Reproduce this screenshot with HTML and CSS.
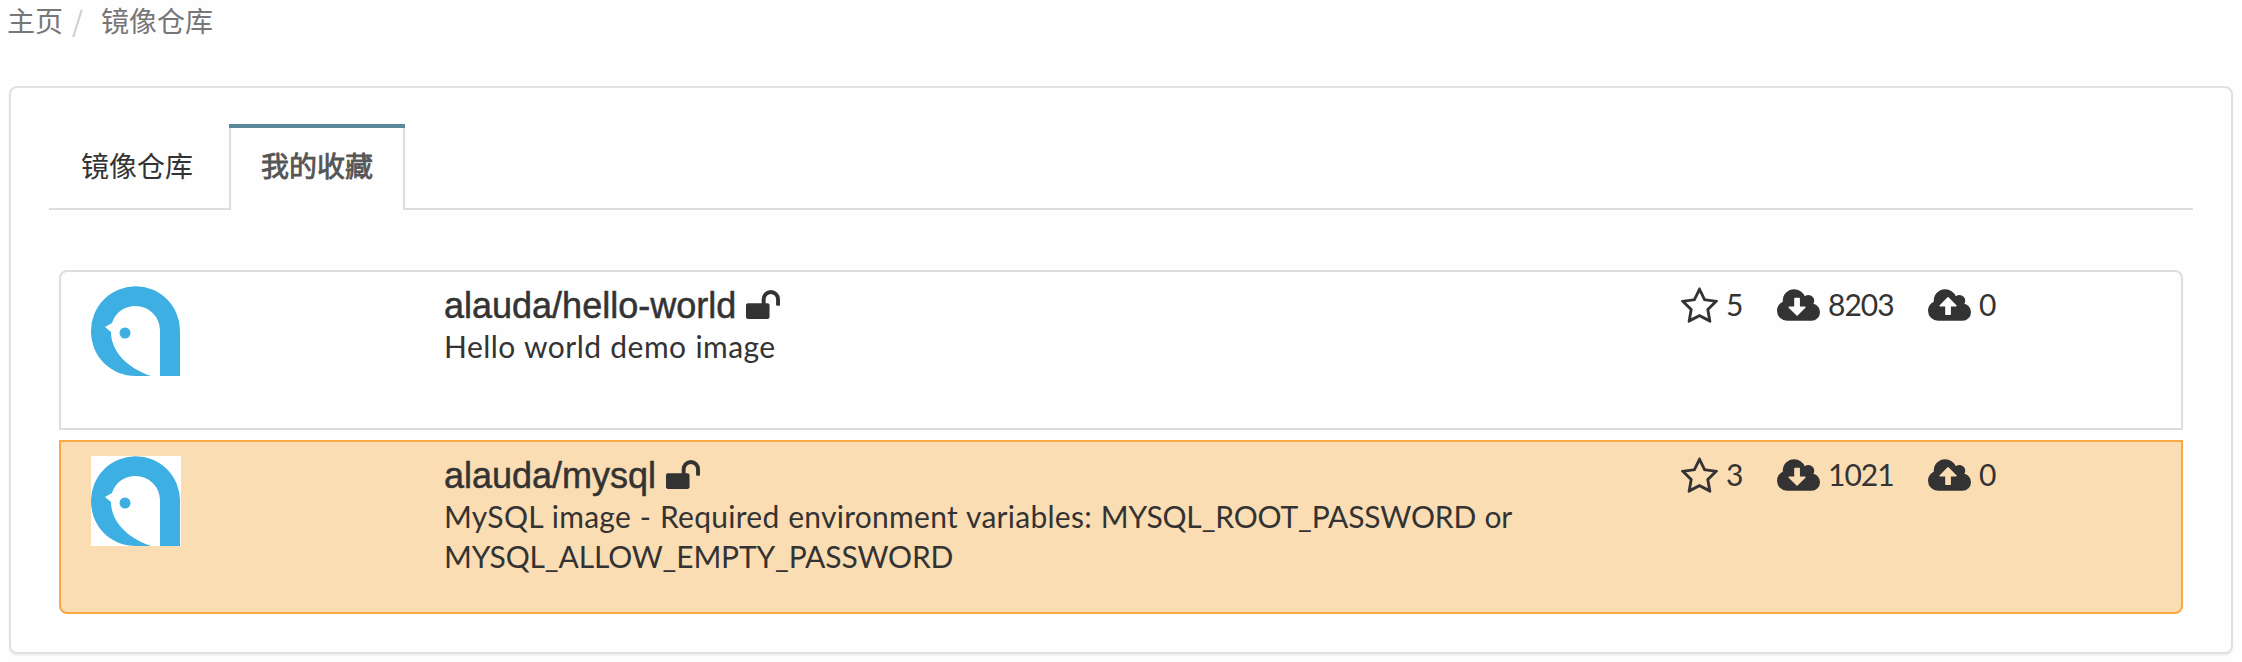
FILE: index.html
```html
<!DOCTYPE html>
<html lang="zh-CN">
<head>
<meta charset="utf-8">
<title>镜像仓库</title>
<link rel="stylesheet" href="styles.css">
</head>
<body>
<svg class="symbols" aria-hidden="true">
  <symbol id="unlock" viewBox="64 128 1664 1408"><path d="M1728 576v256q0 26-19 45t-45 19h-64q-26 0-45-19t-19-45v-256q0-106-75-181t-181-75-181 75-75 181v192h96q40 0 68 28t28 68v576q0 40-28 68t-68 28h-960q-40 0-68-28t-28-68v-576q0-40 28-68t68-28h672v-192q0-185 131.5-316.5t316.5-131.5 316.5 131.5 131.5 316.5z"/></symbol>
  <symbol id="star" viewBox="64 32 1664 1587"><path d="M1201 1004l306-297-422-62-189-382-189 382-422 62 306 297-73 421 378-199 377 199zm527-357q0 22-26 48l-363 354 86 500q1 7 1 20 0 50-41 50-19 0-40-12l-449-236-449 236q-22 12-40 12-21 0-31.5-14.5t-10.5-35.5q0-6 2-20l86-500-364-354q-25-27-25-48 0-37 56-46l502-73 225-455q19-41 49-41t49 41l225 455 502 73q56 9 56 46z"/></symbol>
  <symbol id="download" viewBox="-64 128 1920 1408"><path d="M1216 928q0-14-9-23t-23-9h-224v-352q0-13-9.5-22.5t-22.5-9.5h-192q-13 0-22.5 9.5t-9.5 22.5v352h-224q-13 0-22.5 9.5t-9.5 22.5q0 14 9 23l352 352q9 9 23 9t23-9l351-351q10-12 10-24zm640 224q0 159-112.5 271.5t-271.5 112.5h-1088q-185 0-316.5-131.5t-131.5-316.5q0-130 70-240t188-165q-2-30-2-43 0-212 150-362t362-150q156 0 285.5 87t188.500 231q71-62 166-62 106 0 181 75t75 181q0 76-41 138 130 31 213.5 135.5t83.5 238.5z"/></symbol>
  <symbol id="upload" viewBox="-64 128 1920 1408"><path d="M1216 864q0-14-9-23l-352-352q-9-9-23-9t-23 9l-351 351q-10 12-10 24 0 14 9 23t23 9h224v352q0 13 9.500 22.500t22.500 9.500h192q13 0 22.500-9.500t9.500-22.500v-352h224q13 0 22.500-9.500t9.500-22.500zm640 288q0 159-112.5 271.5t-271.5 112.5h-1088q-185 0-316.5-131.5t-131.5-316.5q0-130 70-240t188-165q-2-30-2-43 0-212 150-362t362-150q156 0 285.5 87t188.500 231q71-62 166-62 106 0 181 75t75 181q0 76-41 138 130 31 213.5 135.5t83.5 238.5z"/></symbol>
  <symbol id="bird" viewBox="0 0 90 90">
    <rect width="90" height="90" fill="#fff"/>
    <path fill="#3eafe3" d="M89 90V44.500A44.500 44.500 0 0 0 0 45C0 71 20 90 45 90H60C36 82 20 65 20 46L14 41L21 37C24 27 33 20 44.500 20A24.500 24.500 0 0 1 69 44V90Z"/>
    <circle cx="34" cy="47" r="5.500" fill="#3eafe3"/>
  </symbol>
</svg>
<nav class="breadcrumb"><a>主页</a><span class="slash">/</span><a>镜像仓库</a></nav>
<main class="panel">
  <div class="tabs">
    <div class="tab">镜像仓库</div>
    <div class="tab active"><div class="tab-label">我的收藏</div></div>
    <div class="tabs-rest"></div>
  </div>
  <div class="list">
    <article class="item">
      <svg class="logo"><use href="#bird"/></svg>
      <div class="info">
        <h4 class="name">alauda/hello-world<svg class="lock"><use href="#unlock"/></svg></h4>
        <p class="desc hello">Hello world demo image</p>
      </div>
      <div class="stats">
        <span class="stat stars"><svg class="star"><use href="#star"/></svg>5</span>
        <span class="stat pulls"><svg class="cloud"><use href="#download"/></svg>8203</span>
        <span class="stat"><svg class="cloud"><use href="#upload"/></svg>0</span>
      </div>
    </article>
    <article class="item selected">
      <svg class="logo"><use href="#bird"/></svg>
      <div class="info">
        <h4 class="name">alauda/mysql<svg class="lock"><use href="#unlock"/></svg></h4>
        <p class="desc"><span class="lead">MySQL image - Required environment variables: </span><span class="var">MYSQL_ROOT_PASSWORD or</span> <span class="var">MYSQL_ALLOW_EMPTY_PASSWORD</span></p>
      </div>
      <div class="stats">
        <span class="stat stars"><svg class="star"><use href="#star"/></svg>3</span>
        <span class="stat pulls"><svg class="cloud"><use href="#download"/></svg>1021</span>
        <span class="stat"><svg class="cloud"><use href="#upload"/></svg>0</span>
      </div>
    </article>
  </div>
</main>
</body>
</html>
```
FILE: styles.css
```css
* { box-sizing: border-box; }
body {
  margin: 0;
  height: 662px;
  padding: 0 9px;
  background: #fefefe;
  color: #333;
  font-family: Lato, "Noto Sans CJK SC", sans-serif;
  overflow: hidden;
}
.symbols { display: none; }
.breadcrumb {
  height: 86px;
  line-height: 41px;
  font-size: 28px;
  font-family: "Noto Sans CJK SC", sans-serif;
  color: #777;
  margin-left: -2px;
}
.slash { color: #ccc; margin: 0 18px 0 9px; }
.panel {
  height: 568px;
  border: 2px solid #e1e1e1;
  border-radius: 8px;
  box-shadow: 0 2px 2px rgba(0, 0, 0, .05);
  padding: 36px 38px 0;
  background: #fefefe;
}
.tabs { display: flex; height: 86px; }
.tab {
  width: 180px;
  padding-left: 32px;
  border-bottom: 2px solid #ddd;
  line-height: 82px;
  font-size: 28px;
  font-family: "Noto Sans CJK SC", sans-serif;
}
.tab.active {
  width: 176px;
  border-top: 4px solid #5a8999;
  border-bottom: 0;
  padding: 0;
  line-height: 74px;
  color: #555;
  -webkit-text-stroke: .8px #555;
}
.tab-label {
  height: 100%;
  padding-left: 30px;
  border: solid #ddd;
  border-width: 0 2px;
}
.tabs-rest { flex: 1; border-bottom: 2px solid #ddd; }
.list { display: grid; gap: 10px; padding: 60px 10px 0; }
.item {
  display: flex;
  height: 160px;
  padding: 14px 30px 0;
  border: 2px solid #ddd;
  border-radius: 8px 8px 0 0;
}
.item.selected {
  height: 174px;
  background: #fbddb3;
  border-color: #f8a944;
  border-radius: 0 0 8px 8px;
}
.logo { width: 90px; height: 90px; flex: none; margin-right: 263px; }
.info { width: 1137px; margin-right: 147px; flex: none; }
.name {
  display: flex;
  margin: 0;
  height: 40px;
  font: 400 36px/40px "Liberation Sans", Arial, sans-serif;
  -webkit-text-stroke: .5px #333;
}
.lock { width: 34px; height: 29px; margin: 4px 0 0 10px; fill: #333; stroke: none; }
.desc { margin: 0; font-size: 30px; line-height: 40px; word-spacing: .8px; }
.hello { letter-spacing: .45px; }
.lead { letter-spacing: .27px; }
.var { letter-spacing: -.15px; }
.stats {
  display: flex;
  margin: 0 -30px 0 -47px;
  line-height: 37px;
  font-size: 30px;
  letter-spacing: -1px;
}
.stat { display: flex; flex: none; gap: 8px; }
.stars { width: 96px; }
.pulls { width: 151px; }
.star { width: 37px; height: 36px; margin-top: 1px; }
.cloud { width: 43px; height: 32px; margin-top: 3px; }
.stat svg { fill: #333; }
```
